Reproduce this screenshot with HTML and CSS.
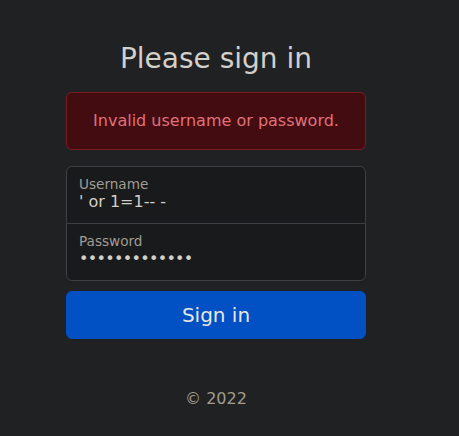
FILE: index.html
```html
<!DOCTYPE html>
<html lang="en">
<head>
<meta charset="utf-8">
<title>Please sign in</title>
<link rel="stylesheet" href="styles.css">
</head>
<body>
<main class="signin">
  <h1 class="title">Please sign in</h1>
  <div class="alert">Invalid username or password.</div>
  <div class="fields">
    <div class="field field-user">
      <div class="field-label">Username</div>
      <div class="field-value">' or 1=1-- -</div>
    </div>
    <div class="field field-pass">
      <div class="field-label">Password</div>
      <div class="field-value dots">•••••••••••••</div>
    </div>
  </div>
  <button class="btn" type="button">Sign in</button>
  <p class="footer">© 2022</p>
</main>
</body>
</html>
```
FILE: styles.css
```css
html, body {
  margin: 0;
  padding: 0;
  background: #1f2123;
  height: 100%;
}
body {
  font-family: "DejaVu Sans", sans-serif;
  color: #d3cfc9;
  font-size: 16px;
  line-height: 1.5;
}
.signin {
  box-sizing: border-box;
  width: 366px;
  padding: 42px 0 0 66px;
  display: flex;
  flex-direction: column;
}
.title {
  margin: 0 0 16px;
  font-size: 28px;
  line-height: 33.6px;
  font-weight: 400;
  text-align: center;
  color: #d3cfc9;
}
.alert {
  box-sizing: border-box;
  height: 58px;
  padding: 16px;
  margin-bottom: 16px;
  text-align: center;
  background: #430c11;
  border: 1px solid #7a1a22;
  border-radius: 6px;
  color: #e0717b;
}
.fields {
  display: flex;
  flex-direction: column;
  margin-bottom: 10px;
}
.field {
  box-sizing: border-box;
  height: 58px;
  padding: 10px 12px 0;
  background: #181a1b;
  border: 1px solid #3c4043;
}
.field-user {
  border-radius: 6px 6px 0 0;
}
.field-pass {
  margin-top: -1px;
  border-radius: 0 0 6px 6px;
}
.field-label {
  font-size: 13.6px;
  line-height: 15px;
  color: #a19c95;
}
.field-value {
  font-size: 16px;
  line-height: 20px;
  color: #d3cfc9;
}
.dots {
  letter-spacing: -0.7px;
}
.btn {
  box-sizing: border-box;
  height: 48px;
  width: 100%;
  padding: 8px 16px;
  border: 1px solid #0150c4;
  border-radius: 6px;
  background: #0151c5;
  color: #e8e6e3;
  font-family: "DejaVu Sans", sans-serif;
  font-size: 20px;
  line-height: 30px;
}
.footer {
  margin: 48px 0 16px;
  text-align: center;
  color: #a39c8e;
}
```
